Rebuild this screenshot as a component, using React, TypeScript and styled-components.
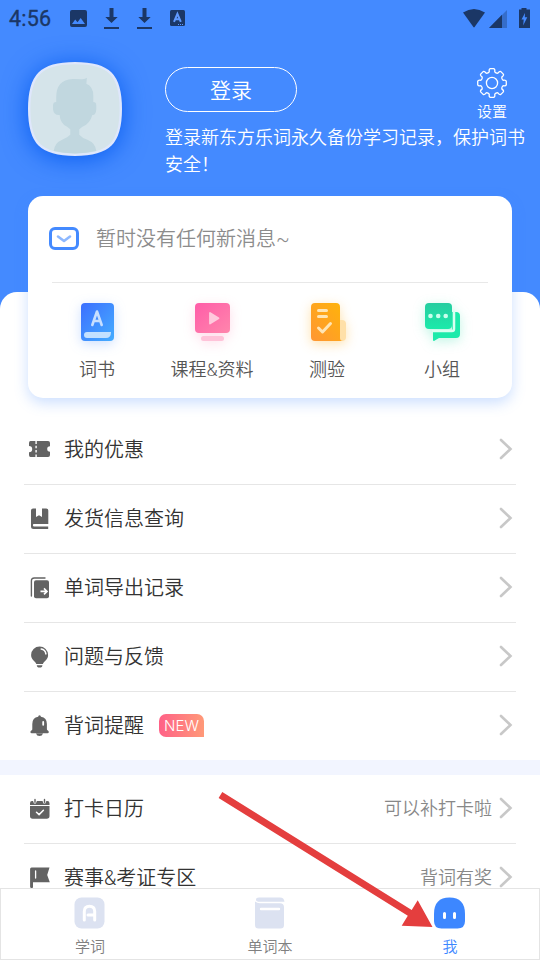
import React from 'react';
import styled, { createGlobalStyle } from 'styled-components';

const Global = createGlobalStyle`
  * { box-sizing: border-box; }
  body { margin: 0; }
  svg { display: block; flex: none; overflow: visible; }
`;

const Screen = styled.div`
  position: relative;
  width: 540px;
  height: 960px;
  display: flex;
  flex-direction: column;
  overflow: hidden;
  background: #448aff;
  font-family: Roboto, "Noto Sans CJK SC", sans-serif;
  font-weight: 350;
  color: #333;
`;

const StatusBar = styled.div`
  height: 37px;
  flex: none;
  display: flex;
  align-items: center;
  justify-content: space-between;
  padding: 0 9px;
  color: #1b3766;
`;

const StatusGroup = styled.div`
  display: flex;
  align-items: center;
`;

const Clock = styled.span`
  width: 60px;
  padding-top: 1px;
  font: 400 21.5px/36px Roboto, sans-serif;
  letter-spacing: 0.2px;
  -webkit-text-stroke: 0.35px #1b3766;
  color: #1b3766;
`;

const Profile = styled.header`
  height: 255px;
  flex: none;
  display: flex;
  padding: 25px 0 0 28px;
  color: #fff;
`;

const Avatar = styled.div`
  width: 94px;
  height: 94px;
  flex: none;
  margin-right: 43px;
  filter: drop-shadow(0 3px 13px #075cf0);
`;

const ProfileBody = styled.div`
  width: 375px;
`;

const ProfileTop = styled.div`
  height: 56px;
  display: flex;
  justify-content: space-between;
  padding-top: 5px;
`;

const LoginButton = styled.button`
  width: 132px;
  height: 45px;
  border: 1px solid #fff;
  border-radius: 23px;
  background: none;
  color: #fff;
  font: 350 21px/43px "Noto Sans CJK SC", sans-serif;
  padding: 0;
`;

const Settings = styled.div`
  width: 66px;
  margin-right: 15px;
  padding-top: 1px;
  display: flex;
  flex-direction: column;
  align-items: center;
  font-size: 15px;
  line-height: 22px;
`;

const SettingsLabel = styled.span`
  margin-top: 3px;
`;

const Notice = styled.p`
  margin: 6px 0 0;
  font-size: 18px;
  line-height: 27px;
`;

const Sheet = styled.main`
  flex: 1;
  min-height: 0;
  display: flex;
  flex-direction: column;
  background: #fff;
  border-radius: 17px 17px 0 0;
`;

const Card = styled.section`
  height: 202px;
  flex: none;
  margin: -96px 28px 18px;
  border-radius: 15px;
  background: #fff;
  box-shadow: 0 5px 14px rgba(68, 138, 255, 0.27);
`;

const Message = styled.div`
  height: 87px;
  margin: 0 24px;
  padding-bottom: 2px;
  border-bottom: 1px solid #e8e8e8;
  display: flex;
  align-items: center;
  gap: 17px;
  color: #8c8c8c;
  font-size: 20px;

  svg { margin-left: -3px; }
`;

const MessageText = styled.span`
  padding-bottom: 2px;
`;

const Shortcuts = styled.div`
  display: grid;
  grid-template-columns: repeat(4, 115px);
  margin-left: 12px;
  padding-top: 20px;
`;

const Shortcut = styled.div<{ $glow: string }>`
  display: flex;
  flex-direction: column;
  align-items: center;
  gap: 16px;
  font-size: 18px;
  line-height: 26px;
  color: #555;

  svg { filter: drop-shadow(0 3px 6px ${(p) => p.$glow}); }
`;

const ShortcutLabel = styled.span`
  margin-right: 1px;
`;

const List = styled.div<{ $last?: boolean }>`
  flex: ${(p) => (p.$last ? '1' : 'none')};
  min-height: 0;
  overflow: hidden;
  padding: 0 24px;
  border-bottom: ${(p) => (p.$last ? '0' : '15px solid #f2f5ff')};
`;

const Row = styled.div<{ $noRule?: boolean }>`
  height: ${(p) => (p.$noRule ? 68 : 69)}px;
  border-bottom: ${(p) => (p.$noRule ? '0' : '1px solid #e6e6e6')};
  display: flex;
  align-items: center;
  padding: 0 3px ${(p) => (p.$noRule ? 2 : 3)}px 4px;
  font-size: 20px;
  line-height: 28px;
`;

const RowIcon = styled.span`
  width: 36px;
  padding-top: 2px;
  color: #636363;
`;

const RowLabel = styled.span`
  padding-top: 2px;
`;

const RowEnd = styled.span`
  margin-left: auto;
  display: flex;
  align-items: center;
  gap: 7px;
`;

const RowHint = styled.span`
  padding-top: 3px;
  font-size: 18px;
  color: #888;
`;

const NewBadge = styled.span`
  width: 45px;
  height: 23px;
  margin-left: 15px;
  border-radius: 7px 7px 0 7px;
  background: linear-gradient(90deg, #ff6187, #ff9978);
  color: #fff;
  font: 300 15px/23px Inter, sans-serif;
  text-align: center;
`;

const TabBar = styled.nav`
  height: 72px;
  flex: none;
  display: grid;
  grid-template-columns: repeat(3, 180px);
  margin: 0;
  border: 1px solid #e4e4e4;
  background: #fff;
`;

const Tab = styled.div<{ $active?: boolean }>`
  display: flex;
  flex-direction: column;
  align-items: center;
  padding-top: 8px;
  gap: 7px;
  margin: 0 1px 0 -3px;
  font-size: 15px;
  line-height: 22px;
  color: ${(p) => (p.$active ? '#3d87ff' : '#808080')};
`;

const TabLabel = styled.span`
  margin-left: 2px;
`;

const Pointer = styled.svg`
  position: absolute;
  left: 0;
  top: 0;
  pointer-events: none;
`;

const StatusIcons = () => (
  <svg width="120" height="22" viewBox="69 8 120 22">
    <g fill="#1b3766">
      <path fillRule="evenodd" d="M72 10h13a2 2 0 0 1 2 2v13a2 2 0 0 1-2 2H72a2 2 0 0 1-2-2V12a2 2 0 0 1 2-2zm0 14h13l-4.3-6-3.2 4.2-2.3-2.6z" />
      {[111.5, 144.5].map((x) => (
        <path key={x} d={`M${x - 2} 8h4v9h4.2l-6.2 6-6.2-6h4.2zM${x - 7.5} 27h15v2h-15z`} />
      ))}
      <rect x="170" y="10" width="15" height="16" rx="1.5" />
    </g>
    <path d="M174 21.8l3.4-8 3.4 8M175.3 19.2h4.2" fill="none" stroke="#609aff" strokeWidth="2" />
    <path d="M178 24.5h1m1 0h1m1 0h1" stroke="#609aff" strokeWidth="1" />
  </svg>
);

const SignalIcons = () => (
  <svg width="68" height="21" viewBox="463 7 68 21" fill="#1b3766">
    <path d="M463 11.6Q474 4.5 485 11.6L474.6 26Q474 26.8 473.4 26Z" />
    <path d="M507 9v18h-18z" opacity=".35" />
    <path d="M502 13.7V27h-13z" />
    <path fillRule="evenodd" d="M521.5 7h5v1.6h3.5V27h-11V8.6h2.5zM525 12l-3.5 6.5h2.2l-.5 6 4.1-8.2h-2.5z" />
  </svg>
);

const AvatarArt = () => (
  <svg width="94" height="94" viewBox="0 0 95 95">
    <path d="M47.5 1.2C82 1.2 93.8 13 93.8 47.5S82 93.8 47.5 93.8 1.2 82 1.2 47.5 13 1.2 47.5 1.2z" fill="#d5e4ea" stroke="#dfe7fc" strokeWidth="2.4" />
    <path d="M28.5 40.5V36Q28.5 18 45 17.3L55 17.5Q58 17.4 59.5 16L59 22Q66 25 66 34V40.5Q69 40.5 69 44V48Q68.5 54 65 53.5Q62.5 62.5 55 65.5L51.8 68V73.5Q55 77 60 78.5Q68.5 82 69 90Q59 92.4 47.5 92.4T26 90Q26.5 82 34.5 78.5Q40 76.5 42.7 73.5V68L39.5 65.5Q32.5 62 32 53.5Q26 54 25.3 48V44Q25.3 40.5 28.5 40.5z" fill="#c1d7df" />
  </svg>
);

// Eight-tooth outline built from alternating outer and inner radii.
const gearPath = (() => {
  const point = (r: number, deg: number) => {
    const a = (deg * Math.PI) / 180;
    return `${(15 + r * Math.cos(a)).toFixed(2)} ${(15 + r * Math.sin(a)).toFixed(2)}`;
  };
  let d = '';
  for (let i = 0; i < 8; i++) {
    const a = i * 45;
    d += `${i ? 'L' : 'M'}${point(11.4, a - 14)}Q${point(14.3, a - 13)} ${point(14.4, a - 7)}L${point(14.4, a + 7)}Q${point(14.3, a + 13)} ${point(11.4, a + 14)}Q${point(10.3, a + 22.5)} ${point(11.4, a + 31)}`;
  }
  return d + 'Z';
})();

const Gear = () => (
  <svg width="30" height="30" viewBox="0 0 30 30" fill="none" stroke="#fff" strokeWidth="1.3" strokeLinejoin="round">
    <path d={gearPath} />
    <circle cx="15" cy="15" r="5.6" />
  </svg>
);

const Envelope = () => (
  <svg width="30" height="23" viewBox="0 0 30 23" fill="none" strokeLinecap="round" strokeLinejoin="round">
    <rect x="1.5" y="1.5" width="27" height="20" rx="4.5" stroke="#448aff" strokeWidth="3" />
    <path d="M9 9.5l6 4.5 6-4.5" stroke="#8db8ff" strokeWidth="2.6" />
  </svg>
);

const BookArt = () => (
  <svg width="33" height="38" viewBox="0 0 33 38">
    <linearGradient id="book" x1="0" y1="0" x2="1" y2="1"><stop stopColor="#3c6fff" /><stop offset="1" stopColor="#45adff" /></linearGradient>
    <rect width="33" height="38" rx="4" fill="url(#book)" />
    <path d="M3 32Q3 29 6 29H30Q30 35 25 35H6Q3 35 3 32z" fill="#c3e1ff" />
    <path d="M11.3 22L16 8.5 20.7 22M12.7 18h6.6" fill="none" stroke="#c7dfff" strokeWidth="2.6" strokeLinecap="round" strokeLinejoin="round" />
  </svg>
);

const CourseArt = () => (
  <svg width="35" height="38" viewBox="0 0 35 38">
    <linearGradient id="course" x1="0" y1="0" x2="1" y2="1"><stop stopColor="#ff5ca8" /><stop offset="1" stopColor="#ff86ac" /></linearGradient>
    <rect width="35" height="30" rx="4" fill="url(#course)" />
    <rect x="6" y="33" width="23" height="5" rx="2.5" fill="#ffc3d9" />
    <path d="M15 10v10.5l8.5-5.2z" fill="#ffcadd" stroke="#ffcadd" strokeWidth="1.8" strokeLinejoin="round" />
  </svg>
);

const QuizArt = () => (
  <svg width="35" height="38" viewBox="-1 0 35 38">
    <linearGradient id="quiz" x1="1" y1="0" x2="0" y2="1"><stop stopColor="#ffb408" /><stop offset="1" stopColor="#ff9634" /></linearGradient>
    <path d="M27 17h4q4 0 4 4v13q0 4-4 4h-6z" fill="#ffe0a8" />
    <path d="M4 0h21q4 0 4 4v31q0 3 3 3H4q-4 0-4-4V4q0-4 4-4z" fill="url(#quiz)" />
    <path d="M7.5 7.5h8M7.5 13.5h8M7.5 25l4 4 8-8.5" fill="none" stroke="#ffe5b4" strokeWidth="3" strokeLinecap="round" strokeLinejoin="round" />
  </svg>
);

const GroupArt = () => (
  <svg width="35" height="38" viewBox="0 0 35 38">
    <linearGradient id="group" x1="0" y1="0" x2="0" y2="1"><stop stopColor="#26cda0" /><stop offset="1" stopColor="#1ceaaa" /></linearGradient>
    <path d="M27 9h4q4 0 4 4v18q0 4-4 4H14l-5 3q-1 0-1-1V27h19z" fill="#1ceaaa" />
    <path d="M29 8v18q0 2-2 2H7" fill="none" stroke="#d9fff1" strokeWidth="2.5" />
    <rect width="27" height="26" rx="4" fill="url(#group)" />
    <g fill="#caffed"><circle cx="5.5" cy="13" r="2.3" /><circle cx="13.2" cy="13" r="2.3" /><circle cx="20.7" cy="13" r="2.3" /></g>
  </svg>
);

const Glyph = ({ children }: { children: React.ReactNode }) => (
  <svg width="24" height="24" viewBox="0 0 24 24" fill="currentColor">{children}</svg>
);

const Ticket = () => (
  <Glyph>
    <path transform="translate(0 -1)" fillRule="evenodd" d="M2.5 4H20q2 0 2 2v3.2a2.8 2.8 0 0 0 0 5.6V18q0 2-2 2H2.5Q1 20 1 18v-2.7a3 3 0 0 0 0-6.4V6q0-2 1.5-2zM7.4 4v3h1.4V4zm0 4.8v2.5h1.4V8.8zm0 4.2v2.5h1.4V13zm0 4.4V20h1.4v-2.6z" />
  </Glyph>
);
const Bookmark = () => (
  <Glyph><path fillRule="evenodd" d="M5 1.5h3V10l3-1.8 3 1.8V1.5h4.3q2 0 2 2V17H6.2q-1.3 0-1.3 1.3t1.3 1.3h14V22H5.5Q3 22 3 19.5v-16q0-2 2-2z" /><path d="M5 18.1h15" stroke="#fff" strokeWidth="1" /></Glyph>
);
const ExportDoc = () => (
  <Glyph><path d="M17 2H6.3Q3.4 2 3.4 5v15" fill="none" stroke="currentColor" strokeWidth="1.4" strokeLinecap="round" /><rect x="6" y="4.2" width="15" height="18" rx="2" /><path d="M12.5 15.4h6m-2.5-3 3 3-3 3" fill="none" stroke="#fff" strokeWidth="1.6" /></Glyph>
);
const Bulb = () => (
  <Glyph><path d="M11.6 1.5a8.5 8.5 0 0 1 8.5 8.5c0 5-4.3 6-5.2 9.1H8.3C7.4 16 3.1 15 3.1 10a8.5 8.5 0 0 1 8.5-8.5zM8.8 20.2h5.6q0 2.3-2.8 2.3t-2.8-2.3z" /><path d="M13.2 4.1q4 .5 4.7 4.8" fill="none" stroke="#fff" strokeWidth="1.5" strokeLinecap="round" /></Glyph>
);
const Bell = () => (
  <Glyph><path d="M11.5 1.2q1.4 0 1.4 1.5 6 .8 6 7.3v5.3q0 .7 1 1.3.9.6.9 1.4 0 1.2-1.4 1.2H3.7q-1.3 0-1.3-1.2 0-.8.9-1.4 1-.6 1-1.3V10q0-6.5 5.9-7.3 0-1.5 1.3-1.5zM8 19.5h7q-.8 2.5-3.5 2.5T8 19.5z" /><rect x="14.3" y="7" width="1.8" height="4.7" rx=".9" fill="#fff" /></Glyph>
);
const Calendar = () => (
  <Glyph><path d="M2 8V6.2Q2 4 4 4h1l1 2.5h1.8L8.9 4h5.6l1 2.5h1.8L18.4 4h1Q21.5 4 21.5 6.2V8zM2 9.1h19.5v10q0 2.7-2.7 2.7H4.7Q2 21.8 2 19z" /><path d="M7 2.5v2.8M16.5 2.5v2.8" stroke="currentColor" strokeWidth="1.4" strokeLinecap="round" /><path d="M8.5 15.2l2.6 2.4 4.3-4.3" fill="none" stroke="#fff" strokeWidth="1.5" strokeLinecap="round" strokeLinejoin="round" /></Glyph>
);
const FlagGlyph = () => (
  <Glyph><path d="M3.5 1.5h18l-2.3 7.5 2.6 7.3H5v4.5q0 1.4-1.3 1.4t-1.6-1.4V3q0-1.5 1.4-1.5z" /><path d="M7.6 5v7" stroke="#fff" strokeWidth="1.3" strokeLinecap="round" /></Glyph>
);

const Chevron = () => (
  <svg width="14" height="22" viewBox="0 0 14 22" fill="none" stroke="#c8c8c8" strokeWidth="2.6" strokeLinecap="round"><path d="M2 2l9.5 9L2 20" /></svg>
);

const LearnTab = () => (
  <svg width="31" height="32" viewBox="0 0 31 32"><rect x=".5" y=".5" width="30" height="31" rx="7" fill="#dce2f1" /><path d="M10.3 23V14.2q0-5 5.2-5t5.2 5V23M14 18h6.5" fill="none" stroke="#fff" strokeWidth="3" strokeLinecap="round" /></svg>
);
const NotebookTab = () => (
  <svg width="31" height="32" viewBox="0 0 31 32"><path d="M5 .5h21q4 0 4.5 4.3H6Q2 4.8 2 2.8 2 .5 5 .5zM1 4.5Q3 6 6 6.3h20q4 0 4 4V28q0 3.5-3.5 3.5h-22Q1 31.5 1 28z" fill="#dce2f1" /><path d="M7 12h18" stroke="#fff" strokeWidth="2.4" strokeLinecap="round" /></svg>
);
const MeTab = () => (
  <svg width="31" height="32" viewBox="0 0 31 32"><path d="M15.5.5Q31 .5 31 17v7q0 7.5-7.5 7.5h-16Q0 31.5 0 24v-7Q0 .5 15.5.5z" fill="#3d87ff" /><path d="M10.5 16.5v4M20.5 16.5v4" stroke="#fff" strokeWidth="3" strokeLinecap="round" /></svg>
);

const shortcuts = [
  { label: '词书', Icon: BookArt, glow: 'rgba(60,130,255,.25)' },
  { label: '课程&资料', Icon: CourseArt, glow: 'rgba(255,100,160,.22)' },
  { label: '测验', Icon: QuizArt, glow: 'rgba(255,180,40,.38)' },
  { label: '小组', Icon: GroupArt, glow: 'rgba(30,220,160,.28)' },
];

const services = [
  { label: '我的优惠', Icon: Ticket },
  { label: '发货信息查询', Icon: Bookmark },
  { label: '单词导出记录', Icon: ExportDoc },
  { label: '问题与反馈', Icon: Bulb },
  { label: '背词提醒', Icon: Bell, isNew: true },
];

const activities = [
  { label: '打卡日历', Icon: Calendar, hint: '可以补打卡啦' },
  { label: '赛事&考证专区', Icon: FlagGlyph, hint: '背词有奖' },
];

const tabs = [
  { label: '学词', Icon: LearnTab },
  { label: '单词本', Icon: NotebookTab },
  { label: '我', Icon: MeTab, active: true },
];

export default function App() {
  return (
    <Screen>
      <Global />
      <StatusBar>
        <StatusGroup><Clock>4:56</Clock><StatusIcons /></StatusGroup>
        <SignalIcons />
      </StatusBar>
      <Profile>
        <Avatar><AvatarArt /></Avatar>
        <ProfileBody>
          <ProfileTop>
            <LoginButton>登录</LoginButton>
            <Settings><Gear /><SettingsLabel>设置</SettingsLabel></Settings>
          </ProfileTop>
          <Notice>登录新东方乐词永久备份学习记录，保护词书安全！</Notice>
        </ProfileBody>
      </Profile>
      <Sheet>
        <Card>
          <Message><Envelope /><MessageText>暂时没有任何新消息~</MessageText></Message>
          <Shortcuts>
            {shortcuts.map(({ label, Icon, glow }) => (
              <Shortcut key={label} $glow={glow}><Icon /><ShortcutLabel>{label}</ShortcutLabel></Shortcut>
            ))}
          </Shortcuts>
        </Card>
        <List>
          {services.map(({ label, Icon, isNew }) => (
            <Row key={label} $noRule={isNew}>
              <RowIcon><Icon /></RowIcon>
              <RowLabel>{label}</RowLabel>
              {isNew && <NewBadge>NEW</NewBadge>}
              <RowEnd><Chevron /></RowEnd>
            </Row>
          ))}
        </List>
        <List $last>
          {activities.map(({ label, Icon, hint }) => (
            <Row key={label}>
              <RowIcon><Icon /></RowIcon>
              <RowLabel>{label}</RowLabel>
              <RowEnd><RowHint>{hint}</RowHint><Chevron /></RowEnd>
            </Row>
          ))}
        </List>
      </Sheet>
      <TabBar>
        {tabs.map(({ label, Icon, active }) => (
          <Tab key={label} $active={active}><Icon /><TabLabel>{label}</TabLabel></Tab>
        ))}
      </TabBar>
      <Pointer width="540" height="960" viewBox="0 0 540 960">
        <path d="M222.3 792L411.7 910 417.7 900.3 432.5 927 401.7 925.7 407.8 915.8 218.6 798z" fill="#e43e3e" />
      </Pointer>
    </Screen>
  );
}
